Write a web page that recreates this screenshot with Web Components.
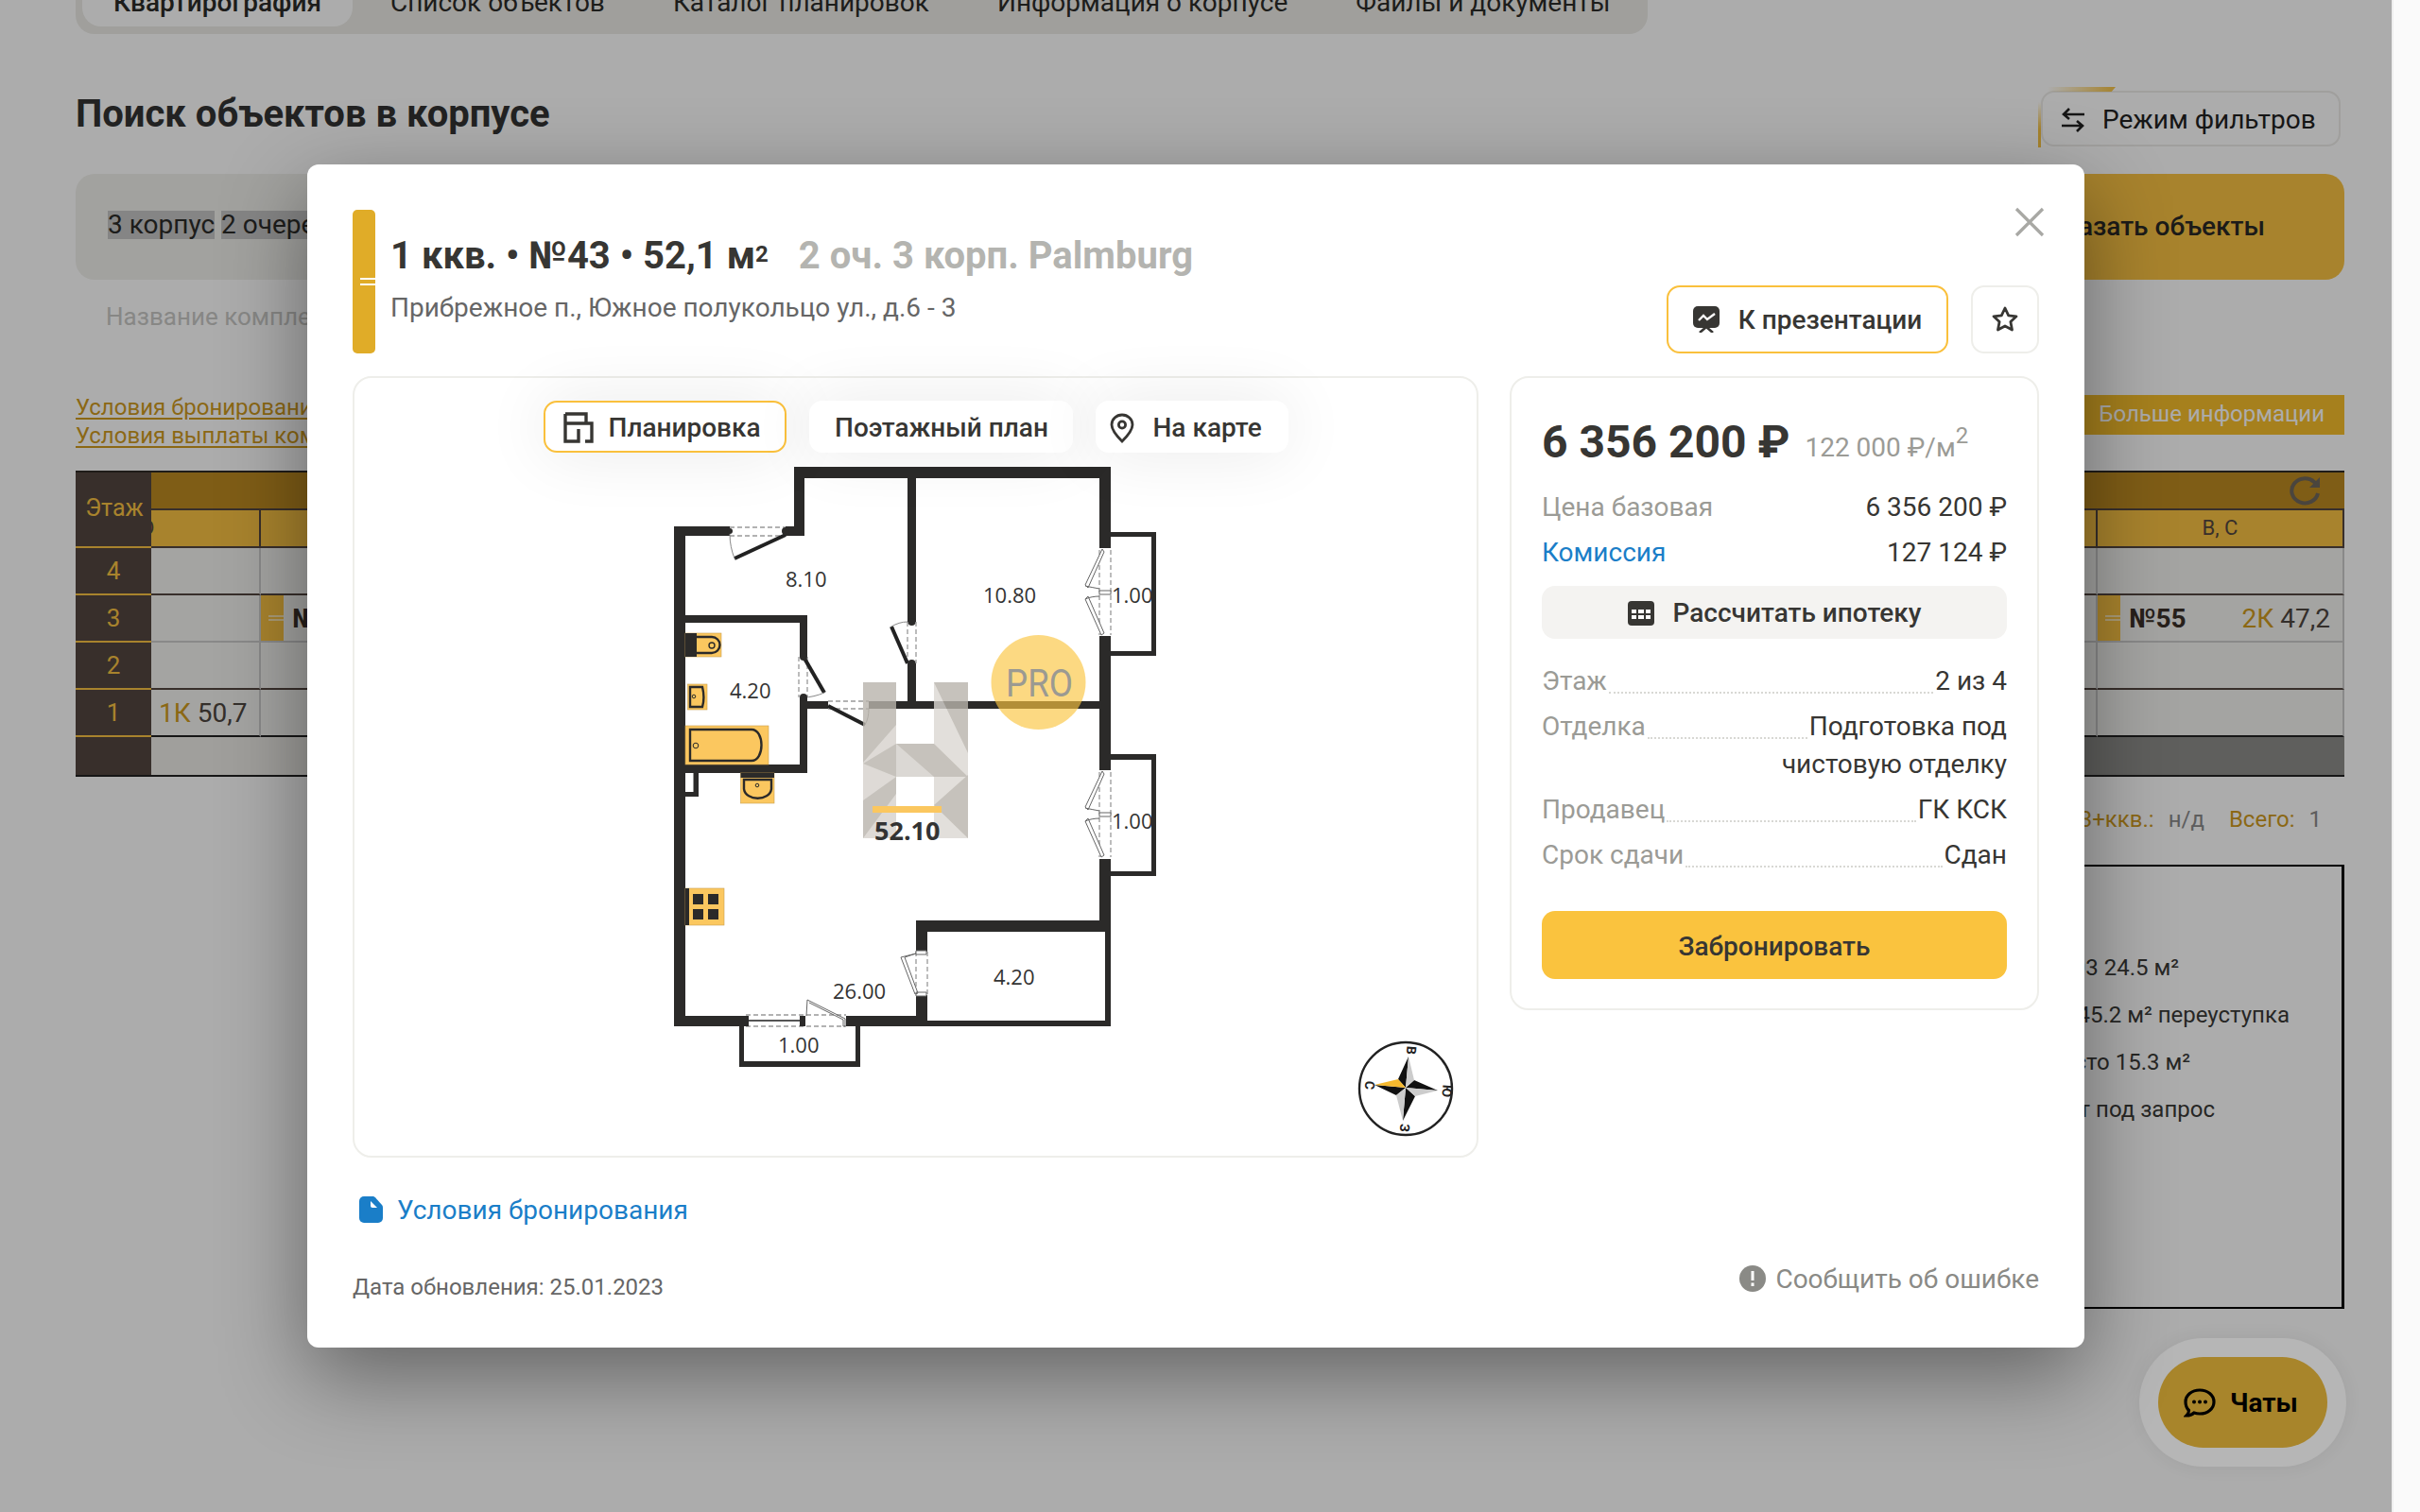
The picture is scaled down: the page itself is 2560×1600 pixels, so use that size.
<!doctype html>
<html lang="ru"><head><meta charset="utf-8"><title>Поиск объектов в корпусе</title>
<style>
html,body{margin:0;padding:0;background:#fff;overflow:hidden}
body{font-family:Roboto,"Liberation Sans",sans-serif;color:#373633}
</style></head>
<body>
<app-root></app-root>
<script>
function define(name,html){
  customElements.define(name,class extends HTMLElement{
    constructor(){super();const r=this.attachShadow({mode:'open'});const t=document.createElement('template');t.innerHTML=html;r.appendChild(t.content.cloneNode(true));}
  });
}
const font='font-family:Roboto,"Liberation Sans",sans-serif;';

define('tab-bar',`<style>
:host{display:flex;width:1663px;height:70px;margin-top:-34px;background:#edece7;border-radius:0 0 20px 20px;padding-left:7px;box-sizing:border-box;font-size:28px;color:#2c2b29}
div{height:62px;box-sizing:border-box;padding:20px 33px 0;line-height:34px;white-space:nowrap}
.on{background:#fff;border-radius:0 0 20px 20px;font-weight:500;margin-right:7px}
.t2,.t3,.t4{margin-right:6px}
</style>
<div class="on">Квартирография</div><div class="t2">Список объектов</div><div class="t3">Каталог планировок</div><div class="t4">Информация о корпусе</div><div>Файлы и документы</div>`);

define('page-head',`<style>
:host{display:flex;justify-content:space-between;align-items:flex-start;margin-top:60px;height:59px}
h1{margin:0;font-size:40px;line-height:50px;font-weight:700;color:#333}
.f{position:relative;width:317px;height:59px;margin-right:4px;box-sizing:border-box;border:2px solid #edece9;border-radius:14px;background:#fff;display:flex;align-items:center;gap:18px;padding:2px 0 0 19px;font-size:28px;color:#222}
.f::before{content:"";position:absolute;left:5px;top:-6px;width:72px;height:5px;background:linear-gradient(90deg,rgba(246,194,67,0),#f6c243);clip-path:polygon(0 0,100% 0,94% 100%,0 100%)}
.f::after{content:"";position:absolute;left:-5px;top:10px;width:3px;height:48px;background:linear-gradient(180deg,rgba(246,194,67,0),#f6c243 60%,#f6c243)}
</style>
<h1>Поиск объектов в корпусе</h1>
<div class="f"><svg width="26" height="28" viewBox="0 0 26 28" fill="none" stroke="#222" stroke-width="2.6"><path d="M25 8H4M9 2 3 8l6 5M1 20h21M17 15l6 5-6 6"/></svg>Режим фильтров</div>`);

define('search-bar',`<style>
:host{display:flex;height:112px;margin-top:29px;font-size:28px}
.p{flex:1;background:#f1f0ec;border-radius:20px 0 0 20px;padding:37px 0 0 34px;box-sizing:border-box;color:#2c2b29}
.p span{display:inline-block;background:#c5c5c5;height:30px;line-height:30px;margin-right:7px}
.b{width:400px;background:#fac343;border-radius:0 20px 20px 0;font-weight:500;color:#2a2925;display:flex;align-items:center;justify-content:flex-end;padding:0 84px 2px 0;box-sizing:border-box}
</style><div class="p"><span>3 корпус</span><span>2 очередь</span></div><div class="b">Показать объекты</div>`);

define('link-row',`<style>
:host{display:block}
.n{font-size:26px;line-height:40px;color:#c8c8c6;padding:19px 0 0 32px;height:40px}
.r{display:flex;justify-content:space-between;margin-top:61px}
a{display:block;font-size:24px;line-height:30px;color:#cf9b1f;text-decoration:underline;text-underline-offset:3px}
.m{width:520px;height:42px;margin-top:2px;background:#f7be2b;color:#fff;font-size:24px;line-height:40px;text-align:right;padding-right:21px;box-sizing:border-box}
</style>
<div class="n">Название комплекса</div>
<div class="r"><div><a>Условия бронирования</a><a>Условия выплаты комиссии</a></div><div class="m">Больше информации</div></div>`);

define('floor-grid',`<style>
:host{display:grid;grid-template-columns:80px 116px 1fr 261px;grid-template-rows:40px 40px 50px 50px 50px 50px 40px;margin-top:22px;border-top:2px solid #2e2a26;border-bottom:2px solid #222;font-size:28px;color:#534740;height:320px}
.fl{background:#534740;color:#fac343;display:flex;align-items:center;justify-content:center;border-bottom:2px solid #fac343;box-sizing:border-box;font-size:26px}
.fl.h{grid-row:1 / span 2;font-size:25px;padding:0 0 4px 2px}
.fl.e{border:0}
.h1{grid-column:2 / span 3;background:#bc8a21;border-bottom:2px solid #534740;box-sizing:border-box;display:flex;justify-content:flex-end;padding-right:24px;align-items:center}
.h2{background:#fac343;border-bottom:2px solid #534740;border-right:2px solid #534740;box-sizing:border-box;overflow:hidden;font-size:22px;display:flex;align-items:center;justify-content:center;padding-bottom:2px}
.c{background:#f4f4f1;border-right:2px solid #ccc;box-sizing:border-box;border-bottom:2px solid #534740;display:flex;align-items:center;white-space:nowrap;overflow:hidden}
.g{border-bottom-color:#ccc}
.d{border-bottom-color:#222}
.m{width:24px;height:100%;background:#fac343;position:relative;flex:none;margin-right:9px}
.m::after{content:"";position:absolute;right:0;left:8px;top:21px;height:2px;border-bottom:2px solid rgba(255,255,255,.6);border-top:2px solid rgba(255,255,255,.6)}
b{font-size:28px;color:#3a3029;font-weight:700}
.k{color:#cf9b1f}.v{color:#4e4640}
.e2{background:linear-gradient(90deg,#edece7 60%,#8d8d8a 60%);grid-column:2 / span 3}
</style>
<div class="fl h">Этаж</div>
<div class="h1"><svg width="34" height="32" viewBox="0 0 34 32" fill="none" stroke="#6e675d" stroke-width="4"><path d="M30 19A14 13 0 1 1 26 7l5 4"/><path d="M32 2v11H21" fill="#6e675d" stroke="none"/></svg></div>
<div class="h2" style="justify-content:flex-start"><span style="margin-left:-11px">D</span></div><div class="h2"></div><div class="h2">В, С</div>
<div class="fl">4</div><div class="c"></div><div class="c"></div><div class="c"></div>
<div class="fl">3</div><div class="c g"></div><div class="c g"><span class="m"></span><b>№54</b></div><div class="c g"><span class="m"></span><b>№55</b><span style="margin-left:auto;padding-right:13px"><span class="k">2К</span> <span class="v">47,2</span></span></div>
<div class="fl">2</div><div class="c"></div><div class="c"></div><div class="c"></div>
<div class="fl">1</div><div class="c d" style="padding-left:8px"><span class="k">1К</span>&nbsp;<span class="v">50,7</span></div><div class="c d"></div><div class="c d"></div>
<div class="fl e"></div><div class="e2"></div>`);

define('floor-summary',`<style>
:host{display:flex;justify-content:flex-end;margin-top:30px;height:30px;line-height:30px;font-size:24px;color:#8a8a8a;padding-right:24px;gap:15px}
i{font-style:normal;color:#cf9b1f}.s{margin-left:11px}
</style><i>3+ккв.:</i><span>н/д</span><i class="s">Всего:</i><span>1</span>`);

define('note-box',`<style>
:host{display:block;align-self:flex-end;width:1700px;height:470px;margin-top:33px;box-sizing:border-box;border:2px solid #000;border-right-width:3px;padding-top:82px;font-size:24px;line-height:50px;color:#3a3a38;text-align:right}
div{white-space:nowrap}
</style>
<div style="padding-right:172px">Кладовая №103 24.5 м²</div>
<div style="padding-right:55px">Квартира 45.2 м² переуступка</div>
<div style="padding-right:160px">Машиноместо 15.3 м²</div>
<div style="padding-right:134px">Паркинг от под запрос</div>`);

define('chat-button',`<style>
:host{position:absolute;left:2263px;top:1416px;width:219px;height:136px;z-index:6;box-sizing:border-box;padding:20px;border-radius:68px;background:rgba(255,255,255,.12);box-shadow:0 0 20px rgba(0,0,0,.06);display:block}
div{height:96px;border-radius:48px;background:#a8852b;display:flex;align-items:center;gap:15px;padding-left:27px;font-size:28px;font-weight:700;color:#000}
</style><div><svg width="34" height="32" viewBox="0 0 34 32" fill="none"><path d="M17 3c8.300 0 15 5.300 15 12.500S25.300 28 17 28c-2 0-4-.3-6-1-2 2-5 3-8 3 1.500-1.500 2.500-3.500 2.500-5.500C3 22 2 19 2 15.500 2 8.300 8.700 3 17 3z" stroke="#000" stroke-width="3.200"/><circle cx="11" cy="15.500" r="2" fill="#000"/><circle cx="17" cy="15.500" r="2" fill="#000"/><circle cx="23" cy="15.500" r="2" fill="#000"/></svg>Чаты</div>`);

define('floor-plan',`<style>
:host{display:block;grid-area:1/1;width:1187px;height:823px}
svg{display:block}
text{font-family:"Open Sans",sans-serif;font-size:22px;fill:#333}
.wall rect{fill:#2b2a29}
.f{fill:#fbc75f;stroke:#c9a050;stroke-width:.6}
.l{fill:none;stroke:#2b2a29;stroke-width:2.4}
.d{fill:none;stroke:#999;stroke-width:1.3;stroke-dasharray:5 3}
.a{fill:none;stroke:#222;stroke-width:4}
.n{fill:none;stroke:#888;stroke-width:1}
.w{fill:#fff;stroke:#666;stroke-width:1}
.c{font-family:Roboto,sans-serif;font-size:14px;font-weight:700;fill:#222;text-anchor:middle}
</style>
<svg width="1187" height="823" viewBox="375 400 1187 823">
<g class="wall">
<rect x="840" y="494" width="335" height="12"/><rect x="840" y="494" width="11" height="73"/>
<rect x="713" y="557" width="59" height="10"/><rect x="831" y="557" width="20" height="10"/>
<rect x="713" y="557" width="12" height="529"/>
<rect x="960" y="506" width="9" height="152"/><rect x="960" y="702" width="9" height="48"/>
<rect x="1163" y="494" width="12" height="86"/><rect x="1163" y="673" width="12" height="142"/><rect x="1163" y="909" width="12" height="76"/>
<rect x="846" y="742" width="30" height="8"/><rect x="919" y="742" width="244" height="8"/>
<rect x="725" y="651" width="129" height="8"/><rect x="846" y="651" width="8" height="44"/><rect x="846" y="738" width="8" height="80"/>
<rect x="725" y="809" width="129" height="9"/>
<rect x="725" y="818" width="14" height="25"/>
<rect x="969" y="974" width="206" height="12"/><rect x="969" y="974" width="12" height="33"/><rect x="969" y="1053" width="12" height="33"/>
<rect x="1169" y="986" width="6" height="100"/><rect x="981" y="1080" width="194" height="6"/>
<rect x="713" y="1075" width="76" height="11"/><rect x="895" y="1075" width="74" height="11"/>
<rect x="1175" y="563" width="48" height="5"/><rect x="1218" y="563" width="5" height="131"/><rect x="1175" y="689" width="48" height="5"/>
<rect x="1175" y="798" width="48" height="6"/><rect x="1218" y="798" width="5" height="129"/><rect x="1175" y="922" width="48" height="5"/>
<rect x="782" y="1086" width="5" height="43"/><rect x="905" y="1086" width="5" height="43"/><rect x="782" y="1123" width="128" height="6"/>
</g>
<rect x="725" y="818" width="8.500" height="20" fill="#fff"/>
<!-- fixtures -->
<rect class="f" x="725" y="670" width="38" height="25"/><rect x="725" y="670" width="12" height="25" fill="#2b2a29"/><path class="l" d="M737 674h16a8 8 0 0 1 0 17h-16"/><circle cx="753" cy="683" r="3" class="l" style="stroke-width:1.400"/>
<rect class="f" x="727.500" y="724" width="20.500" height="27"/><path class="l" d="M730 727h13c2 8 2 14 0 21h-13z"/><circle cx="734" cy="737" r="1.800" class="l" style="stroke-width:1"/>
<rect class="f" x="725" y="768" width="88" height="41"/><path class="l" d="M730 772h65c14 0 14 33 0 33h-65z"/><circle cx="736" cy="789" r="2.800" class="l" style="stroke-width:1"/>
<rect class="f" x="783.500" y="818" width="35.500" height="32"/><rect x="783.500" y="818" width="35.500" height="5" fill="#2b2a29"/><path class="l" d="M787 825h29v10c-2 13-27 13-29 0z"/><circle cx="801" cy="831" r="1.800" class="l" style="stroke-width:1"/>
<rect class="f" x="725" y="940" width="41" height="39"/><rect x="725" y="940" width="4" height="39" fill="#2b2a29"/><path fill="#2b2a29" d="M733 946h11v11h-11zM749 946h11v11h-11zM733 962h11v11h-11zM749 962h11v11h-11z"/>
<!-- doors -->
<path class="d" d="M772 558h59M772 567h59"/><path class="a" d="M831 566 777 591"/><path class="n" d="M772 565c0 10 2 18 5 26"/>
<path class="d" d="M960 658v44M969 658v44"/><path class="a" d="M960 702 943 663"/><path class="n" d="M943 663c5-3 11-5 17-5"/>
<path class="d" d="M845 695v43M854 695v43"/><path class="a" d="M850 695 872 733"/><path class="n" d="M872 733c-7 3-15 5-22 5"/>
<path class="d" d="M876 742h43M876 750h43"/><path class="a" d="M876 747 915 767"/><path class="n" d="M915 767c3-5 4-11 4-17"/>
<circle cx="772" cy="562" r="3" fill="#2b2a29"/><circle cx="831" cy="562" r="4" fill="#2b2a29"/><circle cx="964.500" cy="658" r="4" fill="#2b2a29"/><circle cx="964.500" cy="702" r="4" fill="#2b2a29"/><circle cx="850" cy="695" r="4" fill="#2b2a29"/><circle cx="850" cy="738" r="4" fill="#2b2a29"/>
<path class="d" d="M1163 582v90M1175 582v90"/>
<path class="w" d="M1166 581 1148 619l3 3 17-38zM1148 620c4 1 10 2 15 3M1148 634l3-3 17 39-3 2zM1148 634c4-2 10-3 15-3"/><rect x="1163" y="625" width="12" height="4" class="w"/>
<g transform="translate(0 235)"><path class="d" d="M1163 582v90M1175 582v90"/><path class="w" d="M1166 581 1148 619l3 3 17-38zM1148 620c4 1 10 2 15 3M1148 634l3-3 17 39-3 2zM1148 634c4-2 10-3 15-3"/><rect x="1163" y="625" width="12" height="4" class="w"/></g>
<path class="d" d="M969 1007v46M981 1007v46"/><path class="w" d="M969 1009 953 1013l15 39 3-1-14-38zM969 1006h11v4h-11zM969 1050h11v4h-11z"/>
<path class="d" d="M789 1074h106M789 1086h106"/><path d="M791 1080h56" stroke="#555" stroke-width="2"/><rect x="787" y="1075" width="5" height="11" fill="#2b2a29"/><rect x="846" y="1075" width="6" height="11" fill="#2b2a29"/>
<path class="w" style="fill:none" d="M853 1075l1-17 40 20v8h-2v-7l-36-18"/>
<!-- watermark over the walls -->
<g opacity=".8">
<rect x="913" y="722" width="35" height="165" fill="#d6d2cd"/><rect x="988" y="722" width="36" height="165" fill="#dcd8d3"/><rect x="948" y="787" width="40" height="35" fill="#d3cfca"/>
<path d="M948 722v45l-35 40v-85zM913 808l35-21v35zM913 847l35-25v18l-35 47zM948 787l40 35v-35zM988 722h36v75zM1024 820l-36 32 36 35zM988 822h36l-36-35z" fill="#b9b4ac"/>
</g>
<circle cx="1098.500" cy="722" r="50" fill="#fbc43f" opacity=".65"/>
<!-- labels -->
<text x="831" y="621">8.10</text><text x="1040" y="638">10.80</text><text x="1176" y="638">1.00</text>
<text x="772" y="739">4.20</text><text x="1176" y="877">1.00</text><text x="881" y="1057">26.00</text><text x="1051" y="1042">4.20</text><text x="823" y="1114">1.00</text>
<rect x="923" y="853" width="73" height="7" fill="#fbc75f"/>
<text x="925" y="889" style="font-size:27px;font-weight:700;fill:#333">52.10</text>
<text x="1064" y="737" textLength="71" lengthAdjust="spacingAndGlyphs" style="font-family:Roboto,sans-serif;font-size:40px;fill:#9b9a92">PRO</text>
<!-- compass -->
<circle cx="1487" cy="1152" r="49" fill="#fff" stroke="#222" stroke-width="2.400"/>
<path fill="#111" d="M1490 1118 1479 1142 1487 1151zM1521 1154 1496 1143 1487 1151zM1484 1186 1497 1160 1487 1151zM1454 1148 1477 1159 1487 1151z"/>
<path fill="#ccc" d="M1490 1118 1496 1143 1487 1151zM1521 1154 1497 1160 1487 1151zM1484 1186 1477 1159 1487 1151z"/>
<path fill="#f6b92e" d="M1454 1148 1479 1142 1487 1151z"/>
<text class="c" transform="translate(1488 1111) rotate(95)">В</text>
<text class="c" transform="translate(1444 1148) rotate(95)">С</text>
<text class="c" transform="translate(1526 1154) rotate(95)">Ю</text>
<text class="c" transform="translate(1481 1193) rotate(95)">З</text>
</svg>`);

define('view-tabs',`<style>
:host{display:flex;grid-area:1/1;justify-content:center;gap:24px;align-self:start;margin-top:24px;position:relative;z-index:1;font-size:28px;font-weight:500;color:#373633}
div{height:55px;box-sizing:border-box;border:2px solid #fff;border-radius:14px;background:#fff;display:flex;align-items:center;padding-top:2px;box-shadow:0 0 70px rgba(0,0,0,.09)}
.on{border-color:#fac03c;width:257px;padding-left:19px;gap:16px}.p{width:279px;justify-content:center;padding-left:2px}.m{gap:19px;width:204px;padding-left:12px}
</style>
<div class="on"><svg width="32" height="33" viewBox="0 0 32 33" fill="none" stroke="#373633" stroke-width="3.400"><path d="M2 2h22v10H2M2 2v29h14V18M24 12h6v19h-7"/></svg>Планировка</div>
<div class="p">Поэтажный план</div>
<div class="m"><svg width="28" height="32" viewBox="0 0 28 32" fill="none" stroke="#373633" stroke-width="2.800"><path d="M14 30C8 24 3 18 3 12.500 3 6.500 8 2 14 2s11 4.500 11 10.500C25 18 20 24 14 30z"/><circle cx="14" cy="12.500" r="3.600"/></svg>На карте</div>`);

define('plan-card',`<style>
:host{display:grid;width:1191px;height:827px;box-sizing:border-box;border:2px solid #eeeeea;border-radius:20px;background:#fff}
</style><view-tabs></view-tabs><floor-plan></floor-plan>`);

define('price-card',`<style>
:host{display:block;width:560px;height:671px;box-sizing:border-box;border:2px solid #eeeeea;border-radius:20px;background:#fff;padding:38px 32px 0;font-size:28px;line-height:40px;color:#373633}
.pr{display:flex;align-items:baseline;height:60px;line-height:60px;margin-bottom:19px}
.pr b{font-size:48px;font-weight:700;margin-right:16px}
.pr span{color:#9b9b96;position:relative;top:-1px}
sup{font-size:24px;line-height:0;vertical-align:baseline;position:relative;top:-14px}
.r{display:flex;justify-content:space-between;margin-bottom:8px}
.la{color:#9b9b96}
.b{color:#1a7ec8}
.calc{height:56px;margin:15px 0 25px;background:#f4f3f1;border-radius:14px;display:flex;align-items:center;justify-content:center;gap:20px;font-weight:500;padding-top:1px;box-sizing:border-box}
.l{display:flex;margin-bottom:8px}
.l i{flex:1;height:31px;border-bottom:2px dotted #d8d8d4;margin:0 2px}
.w{text-align:right;margin-bottom:8px}
.go{margin-top:39px;height:72px;box-sizing:border-box;padding-top:3px;background:#fac33e;border-radius:14px;display:flex;align-items:center;justify-content:center;font-weight:500}
</style>
<div class="pr"><b>6 356 200 ₽</b><span>122 000 ₽/м<sup>2</sup></span></div>
<div class="r"><span class="la">Цена базовая</span><span>6 356 200 ₽</span></div>
<div class="r" style="margin:0"><span class="b">Комиссия</span><span>127 124 ₽</span></div>
<div class="calc"><svg width="28" height="26" viewBox="0 0 28 26"><rect width="28" height="26" rx="4" fill="#373633"/><path fill="#fff" d="M4 9h5v4H4zM11 9h6v4h-6zM19 9h5v4h-5zM4 15h5v4H4zM11 15h6v4h-6zM19 15h5v4h-5z"/></svg>Рассчитать ипотеку</div>
<div class="l"><span class="la">Этаж</span><i></i><span>2 из 4</span></div>
<div class="l" style="margin:0"><span class="la">Отделка</span><i></i><span>Подготовка под</span></div>
<div class="w">чистовую отделку</div>
<div class="l"><span class="la">Продавец</span><i></i><span>ГК КСК</span></div>
<div class="l" style="margin:0"><span class="la">Срок сдачи</span><i></i><span>Сдан</span></div>
<div class="go">Забронировать</div>`);

define('flat-modal',`<style>
:host{position:absolute;left:325px;top:174px;width:1880px;height:1252px;box-sizing:border-box;padding:48px 48px 0;background:#fff;border-radius:12px;z-index:10;box-shadow:0 30px 90px rgba(0,0,0,.42);display:block}
.head{display:flex;height:152px;position:relative}
.bar{width:24px;flex:none;background:#e0ac28;border-radius:5px;position:relative;margin-right:16px}
.bar::after{content:"";position:absolute;left:8px;right:0;top:72px;height:4px;border-top:2px solid #fff;border-bottom:2px solid #fff}
.t{flex:1;padding-top:24px}
h2{margin:0;font-size:40px;line-height:50px;font-weight:700;color:#373633;white-space:nowrap}
h2 sup{font-size:24px;line-height:0;vertical-align:baseline;position:relative;top:-7px}
h2 span{color:#b4b4b0;margin-left:32px}
.ad{font-size:28px;line-height:40px;color:#666;margin-top:10px}
.act{display:flex;gap:24px;align-self:flex-end;font-size:28px;font-weight:500}
.act div{height:72px;box-sizing:border-box;border-radius:14px;display:flex;align-items:center;justify-content:center}
.pres{width:298px;border:2px solid #fac03c;gap:20px}
.star{width:72px;border:2px solid #eeeeea}
.x{position:absolute;right:-6px;top:-3px;width:32px;height:32px}
.body{display:flex;gap:33px;margin-top:24px;align-items:flex-start}
.terms{display:flex;align-items:center;gap:15px;margin:35px 0 0 7px;height:40px;font-size:28px;color:#1a7ec8}
.foot{display:flex;justify-content:space-between;margin-top:28px;height:40px}
.date{font-size:24px;line-height:40px;color:#666;padding-top:14px}
.rep{display:flex;align-items:center;gap:10px;font-size:28px;color:#8a8a86;height:40px;padding-top:5px}
</style>
<div class="head"><div class="bar"></div>
<div class="t"><h2>1 ккв. • №43 • 52,1 м<sup>2</sup><span>2 оч. 3 корп. Palmburg</span></h2><div class="ad">Прибрежное п., Южное полукольцо ул., д.6 - 3</div></div>
<div class="act"><div class="pres"><svg width="28" height="28" viewBox="0 0 28 28"><rect width="28" height="23" rx="5" fill="#373633"/><path d="M6 15l5-5 4 4 8-6" fill="none" stroke="#fff" stroke-width="2.400"/><path d="M14 22l-7 6M14 22l7 6" stroke="#373633" stroke-width="2.600"/></svg>К презентации</div>
<div class="star"><svg width="30" height="30" viewBox="0 0 30 30" fill="none" stroke="#373633" stroke-width="2.800" stroke-linejoin="round"><path d="m15 3 3.700 7.800 8.300 1-6.100 5.800 1.600 8.400L15 21.900 7.500 26l1.600-8.400L3 11.800l8.300-1z"/></svg></div></div>
<svg class="x" viewBox="0 0 32 32" stroke="#a8a8a4" stroke-width="3.200" fill="none"><path d="M2 2l28 28M30 2 2 30"/></svg>
</div>
<div class="body"><plan-card></plan-card><price-card></price-card></div>
<div class="terms"><svg width="25" height="28" viewBox="0 0 25 28"><path d="M5 0h9c1.200 0 2.200.5 3 1.300l7 7.700c.7.800 1 1.700 1 2.800V23a5 5 0 0 1-5 5H5a5 5 0 0 1-5-5V5a5 5 0 0 1 5-5z" fill="#1a7ec8"/><path d="M12 5l7 7h-5a2 2 0 0 1-2-2z" fill="#fff"/></svg>Условия бронирования</div>
<div class="foot"><div class="date">Дата обновления: 25.01.2023</div><div class="rep"><svg width="28" height="28" viewBox="0 0 28 28"><circle cx="14" cy="14" r="14" fill="#8a8a86"/><path d="M12.500 6h3v10h-3zM12.500 18.500h3v3.500h-3z" fill="#fff"/></svg>Сообщить об ошибке</div></div>`);

define('app-root',`<style>
:host{display:flex;width:2560px;height:1600px;overflow:hidden;${font}}
.page{position:relative;width:2530px;height:1600px;overflow:hidden;background:#fff}
.main{display:flex;flex-direction:column;height:1600px;box-sizing:border-box;padding:0 50px 0 80px;isolation:isolate}
.ov{position:absolute;inset:0;background:rgba(0,0,0,.325);z-index:5}
.sb{width:30px;box-sizing:border-box;background:#fafafa;border-left:2px solid #eee}
</style>
<div class="page"><div class="main"><tab-bar></tab-bar><page-head></page-head><search-bar></search-bar><link-row></link-row><floor-grid></floor-grid><floor-summary></floor-summary><note-box></note-box></div>
<div class="ov"></div><chat-button></chat-button><flat-modal></flat-modal></div><div class="sb"></div>`);
</script>
</body></html>
